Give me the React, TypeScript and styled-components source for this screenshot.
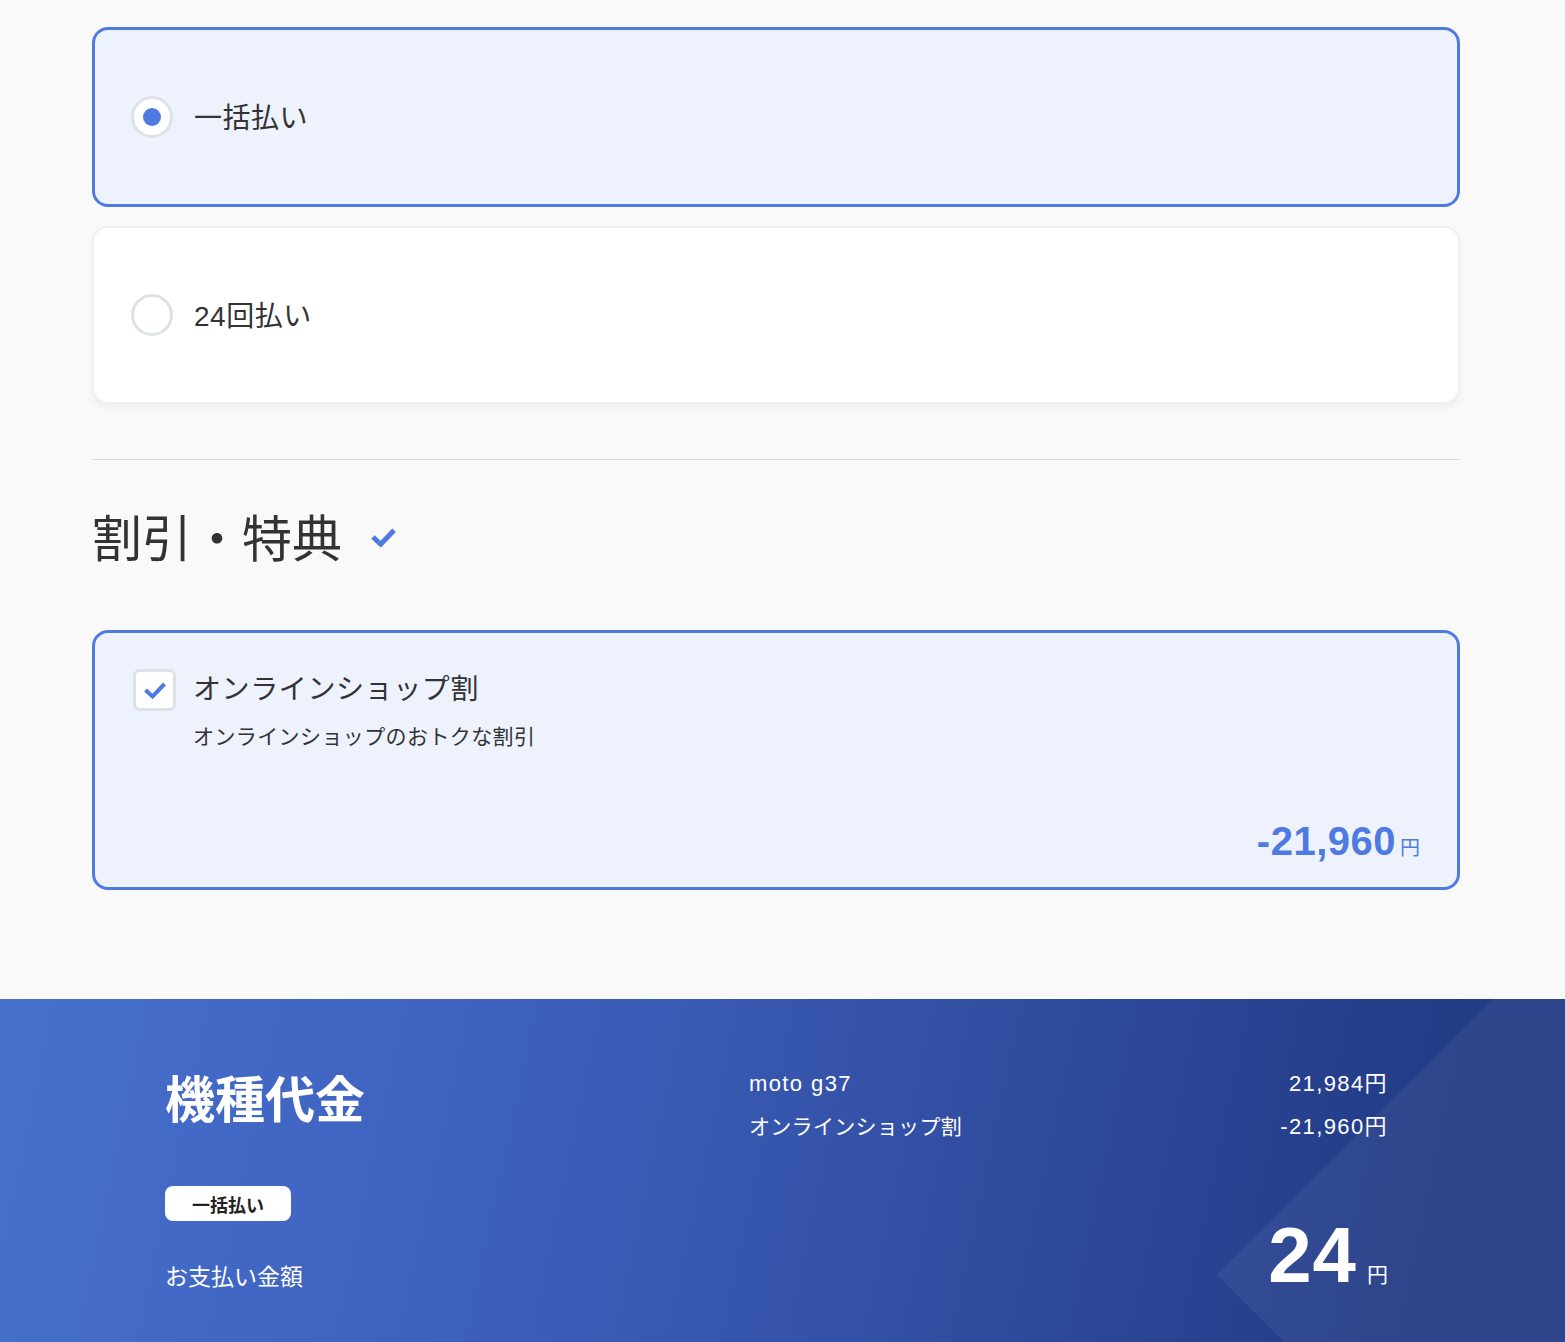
import React, { useState } from "react";
import styled, { createGlobalStyle } from "styled-components";

const blue = "#4f7be0";
const tint = "#edf2fd";

const GlobalStyle = createGlobalStyle`
  body {
    margin: 0;
    background: #f9f9f9;
    color: #333;
    font-family: "Liberation Sans", "Noto Sans CJK JP", sans-serif;
  }
`;

const Main = styled.main`
  padding: 27px 105px 109px 92px;
`;

const OptionList = styled.div`
  display: flex;
  flex-direction: column;
  gap: 19px;
`;

const OptionCard = styled.label<{ $selected: boolean }>`
  box-sizing: border-box;
  display: flex;
  align-items: center;
  gap: 21px;
  height: ${(p) => (p.$selected ? "180px" : "178px")};
  padding: 0 ${(p) => (p.$selected ? "36px" : "37px")};
  border-radius: 16px;
  border: ${(p) => (p.$selected ? `3px solid ${blue}` : "2px solid #eeeeee")};
  background: ${(p) => (p.$selected ? tint : "#fff")};
  box-shadow: ${(p) => (p.$selected ? "none" : "0 3px 8px rgba(0, 0, 0, 0.05)")};
  cursor: pointer;
`;

const Radio = styled.span<{ $checked: boolean }>`
  box-sizing: border-box;
  width: 42px;
  height: 42px;
  border-radius: 50%;
  border: 3px solid #dde2e8;
  background: #fff;
  display: flex;
  align-items: center;
  justify-content: center;
  flex-shrink: 0;

  &::after {
    content: "";
    width: 18px;
    height: 18px;
    border-radius: 50%;
    background: ${(p) => (p.$checked ? blue : "transparent")};
  }
`;

const OptionLabel = styled.span`
  padding-top: 4px;
  font-size: 28px;
  line-height: 40px;
  letter-spacing: 0.5px;
  color: #333;
`;

const Divider = styled.hr`
  border: none;
  border-top: 1px solid #dcdcdc;
  margin: 55px 0 44px;
`;

const SectionTitle = styled.h2`
  display: flex;
  align-items: center;
  gap: 28px;
  margin: 0 0 54px;
  font-size: 50px;
  line-height: 72px;
  font-weight: 400;
  color: #333;

  svg {
    margin-bottom: 6px;
  }
`;

const DiscountCard = styled.div`
  box-sizing: border-box;
  border: 3px solid ${blue};
  border-radius: 16px;
  background: ${tint};
  padding: 36px 37px 26px 38px;
  display: grid;
  grid-template-columns: 42px 1fr;
  column-gap: 18px;
`;

const CheckBox = styled.span`
  box-sizing: border-box;
  width: 43px;
  height: 42px;
  border-radius: 7px;
  border: 3px solid #dde2e8;
  background: #fff;
  display: flex;
  align-items: center;
  justify-content: center;
`;

const DiscountTitle = styled.div`
  font-size: 28px;
  line-height: 42px;
  letter-spacing: 0.6px;
  color: #333;
`;

const DiscountNote = styled.div`
  grid-column: 2;
  margin-top: 10px;
  font-size: 21px;
  line-height: 32px;
  letter-spacing: 0.4px;
  color: #333;
`;

const DiscountPrice = styled.div`
  grid-column: 1 / span 2;
  margin-top: 68px;
  display: flex;
  justify-content: flex-end;
  align-items: baseline;
  color: ${blue};
`;

const PriceValue = styled.span`
  font-size: 40px;
  line-height: 40px;
  font-weight: 700;
  letter-spacing: 0.5px;
`;

const Yen = styled.span<{ $size: number }>`
  font-size: ${(p) => p.$size}px;
  margin-left: ${(p) => (p.$size > 20 ? 10 : 4)}px;
`;

const Summary = styled.footer`
  position: relative;
  overflow: hidden;
  display: flex;
  justify-content: space-between;
  padding: 67px 177px 50px 165px;
  color: #fff;
  background: linear-gradient(
    102deg,
    #4670cc 0%,
    #3f62c0 28%,
    #3554aa 52%,
    #2b4696 72%,
    #223b85 90%
  );

  &::before {
    content: "";
    position: absolute;
    width: 707px;
    height: 707px;
    top: -78px;
    right: -505px;
    transform: rotate(45deg);
    background: rgba(255, 255, 255, 0.055);
  }
`;

const SummaryLeft = styled.div`
  position: relative;
  width: 584px;
  display: flex;
  flex-direction: column;
  align-items: flex-start;
`;

const SummaryTitle = styled.h1`
  margin: 0;
  font-size: 50px;
  line-height: 70px;
  font-weight: 700;
`;

const PlanBadge = styled.span`
  margin-top: 50px;
  width: 126px;
  height: 35px;
  border-radius: 8px;
  background: #fff;
  color: #222;
  font-size: 18px;
  font-weight: 700;
  display: flex;
  align-items: center;
  justify-content: center;
`;

const TotalLabel = styled.div`
  margin-top: 39px;
  font-size: 23px;
  line-height: 34px;
`;

const SummaryRight = styled.div`
  position: relative;
  width: 639px;
  display: flex;
  flex-direction: column;
  justify-content: space-between;
`;

const Lines = styled.div`
  display: flex;
  flex-direction: column;
  gap: 7px;
`;

const Line = styled.div`
  display: flex;
  justify-content: space-between;
  font-size: 22px;
  line-height: 36px;
`;

const LineText = styled.span<{ $wide?: boolean }>`
  font-size: ${(p) => (p.$wide ? "22px" : "21px")};
  letter-spacing: ${(p) => (p.$wide ? "1.4px" : "0.3px")};
`;

const Total = styled.div`
  display: flex;
  justify-content: flex-end;
  align-items: baseline;
`;

const TotalValue = styled.span`
  font-size: 78px;
  line-height: 78px;
  font-weight: 700;
  letter-spacing: 1px;
`;

const Check = ({ w, h, stroke = 4 }: { w: number; h: number; stroke?: number }) => (
  <svg width={w} height={h} viewBox="0 0 24 18" fill="none">
    <polyline
      points="2.5,9 9.5,15.5 21.5,3"
      stroke={blue}
      strokeWidth={stroke}
      strokeLinecap="butt"
      strokeLinejoin="miter"
    />
  </svg>
);

const plans = ["一括払い", "24回払い"];

const lines = [
  { name: "moto g37", price: "21,984円", latin: true },
  { name: "オンラインショップ割", price: "-21,960円", latin: false },
];

export default function App() {
  const [plan, setPlan] = useState(0);

  return (
    <>
      <GlobalStyle />
      <Main>
        <OptionList>
          {plans.map((label, i) => (
            <OptionCard key={label} $selected={plan === i} onClick={() => setPlan(i)}>
              <Radio $checked={plan === i} />
              <OptionLabel>{label}</OptionLabel>
            </OptionCard>
          ))}
        </OptionList>

        <Divider />

        <SectionTitle>
          割引・特典
          <Check w={27} h={20} stroke={4.5} />
        </SectionTitle>

        <DiscountCard>
          <CheckBox>
            <Check w={24} h={18} />
          </CheckBox>
          <DiscountTitle>オンラインショップ割</DiscountTitle>
          <DiscountNote>オンラインショップのおトクな割引</DiscountNote>
          <DiscountPrice>
            <PriceValue>-21,960</PriceValue>
            <Yen $size={20}>円</Yen>
          </DiscountPrice>
        </DiscountCard>
      </Main>

      <Summary>
        <SummaryLeft>
          <SummaryTitle>機種代金</SummaryTitle>
          <PlanBadge>{plans[plan]}</PlanBadge>
          <TotalLabel>お支払い金額</TotalLabel>
        </SummaryLeft>
        <SummaryRight>
          <Lines>
            {lines.map((l) => (
              <Line key={l.name}>
                <LineText $wide={l.latin}>{l.name}</LineText>
                <LineText $wide>{l.price}</LineText>
              </Line>
            ))}
          </Lines>
          <Total>
            <TotalValue>24</TotalValue>
            <Yen $size={21}>円</Yen>
          </Total>
        </SummaryRight>
      </Summary>
    </>
  );
}
